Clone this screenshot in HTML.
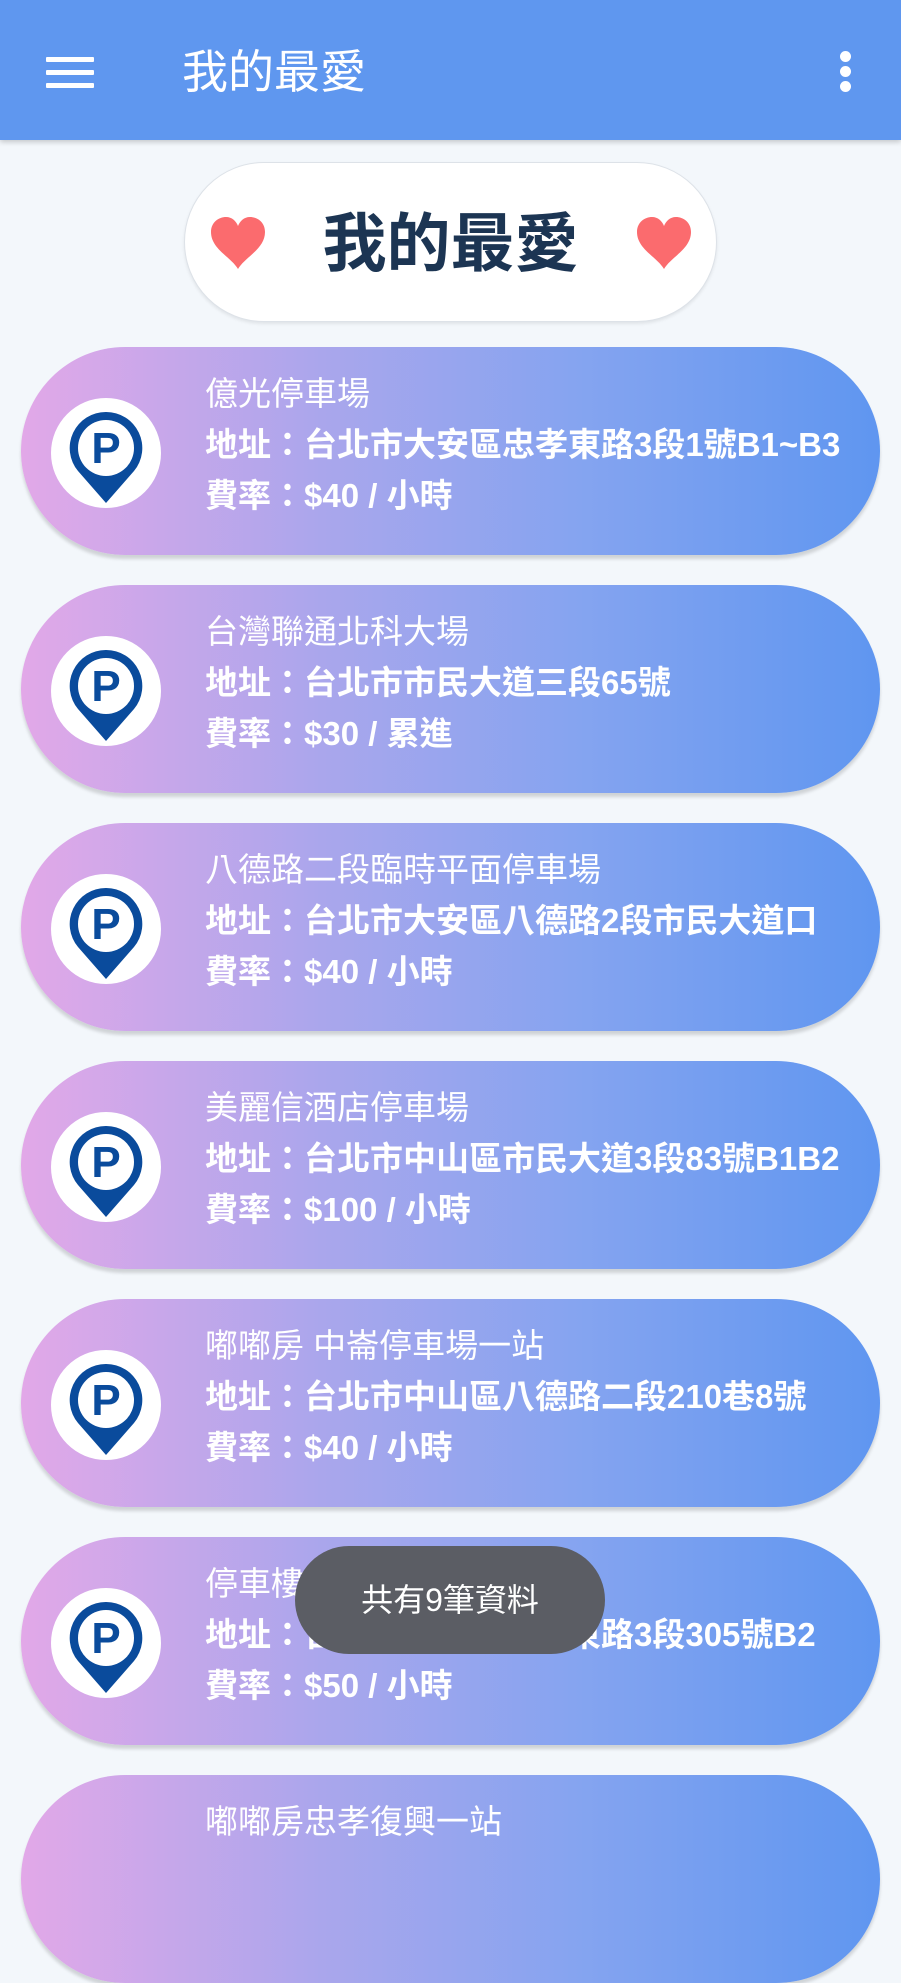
<!DOCTYPE html>
<html><head><meta charset="utf-8">
<style>
*{margin:0;padding:0;box-sizing:border-box}
body{width:901px;height:1817px;overflow:hidden;background:#f3f7fb;font-family:"Liberation Sans","Noto Sans CJK TC",sans-serif;position:relative}
.bar{position:absolute;left:0;top:0;width:901px;height:140px;background:#5f97ef;box-shadow:0 2px 5px rgba(0,0,0,.2)}
.ham{position:absolute;left:46px;width:48px;height:5px;background:#fff;border-radius:1px}
.title{position:absolute;left:182px;top:42px;color:#fff;font-size:46px;line-height:60px}
.dot{position:absolute;left:840px;width:11px;height:11px;border-radius:50%;background:#fff}
.pill{position:absolute;left:184px;top:162px;width:533px;height:160px;background:#fff;border-radius:80px;border:1px solid #dde2e8;box-shadow:0 2px 3px rgba(0,0,0,.08)}
.pill .t{position:absolute;left:0;right:0;top:46px;text-align:center;font-size:64px;font-weight:bold;color:#1c3553;line-height:70px}
.heart{position:absolute;top:52px}
.card{position:absolute;left:21px;width:859px;height:208px;border-radius:104px;background:linear-gradient(90deg,#e2a8e8 0%,#aaa6ec 35%,#85a4f0 65%,#5f96f0 100%);box-shadow:0 4px 3px rgba(0,0,0,.15)}
.ic{position:absolute;left:29px;top:50px;width:112px;height:112px}
.l{position:absolute;left:184px;color:#fff;font-size:33px;line-height:40px;white-space:nowrap}
.l1{top:27px}.l2{top:78px;font-weight:bold}.l3{top:129px;font-weight:bold}
.toast{position:absolute;left:295px;top:1546px;width:310px;height:108px;border-radius:54px;background:#5b5d64;color:#fff;font-size:32px;text-align:center;line-height:108px}
</style></head><body>
<div class="bar">
<div class="ham" style="top:57px"></div><div class="ham" style="top:70px"></div><div class="ham" style="top:83px"></div>
<div class="title">我的最愛</div>
<div class="dot" style="top:51px"></div><div class="dot" style="top:66px"></div><div class="dot" style="top:81px"></div>
</div>
<div class="pill">
<svg class="heart" style="left:24px" width="58" height="56" viewBox="0 0 58 56"><path d="M29 54 C22 42 2 34 2 17 C2 7 10 2 17 2 C23 2 27 6 29 11 C31 6 35 2 41 2 C48 2 56 7 56 17 C56 34 36 42 29 54Z" fill="#fb6b6e"/></svg>
<div class="t">我的最愛</div>
<svg class="heart" style="left:450px" width="58" height="56" viewBox="0 0 58 56"><path d="M29 54 C22 42 2 34 2 17 C2 7 10 2 17 2 C23 2 27 6 29 11 C31 6 35 2 41 2 C48 2 56 7 56 17 C56 34 36 42 29 54Z" fill="#fb6b6e"/></svg>
</div>

<div class="card" style="top:347px"><svg class="ic" viewBox="0 0 112 112"><circle cx="56" cy="56" r="55" fill="#fff"/><path d="M56 15 A36 36 0 0 1 84 74 L56 106 L28 74 A36 36 0 0 1 56 15Z" fill="#0a4b9c"/><circle cx="56" cy="51" r="28" fill="#fff"/><text x="56" y="66" text-anchor="middle" font-family="Liberation Sans" font-weight="bold" font-size="44" fill="#0a4b9c">P</text></svg>
<div class="l l1">億光停車場</div><div class="l l2">地址：台北市大安區忠孝東路3段1號B1~B3</div><div class="l l3">費率：$40 / 小時</div></div>

<div class="card" style="top:585px"><svg class="ic" viewBox="0 0 112 112"><circle cx="56" cy="56" r="55" fill="#fff"/><path d="M56 15 A36 36 0 0 1 84 74 L56 106 L28 74 A36 36 0 0 1 56 15Z" fill="#0a4b9c"/><circle cx="56" cy="51" r="28" fill="#fff"/><text x="56" y="66" text-anchor="middle" font-family="Liberation Sans" font-weight="bold" font-size="44" fill="#0a4b9c">P</text></svg>
<div class="l l1">台灣聯通北科大場</div><div class="l l2">地址：台北市市民大道三段65號</div><div class="l l3">費率：$30 / 累進</div></div>

<div class="card" style="top:823px"><svg class="ic" viewBox="0 0 112 112"><circle cx="56" cy="56" r="55" fill="#fff"/><path d="M56 15 A36 36 0 0 1 84 74 L56 106 L28 74 A36 36 0 0 1 56 15Z" fill="#0a4b9c"/><circle cx="56" cy="51" r="28" fill="#fff"/><text x="56" y="66" text-anchor="middle" font-family="Liberation Sans" font-weight="bold" font-size="44" fill="#0a4b9c">P</text></svg>
<div class="l l1">八德路二段臨時平面停車場</div><div class="l l2">地址：台北市大安區八德路2段市民大道口</div><div class="l l3">費率：$40 / 小時</div></div>

<div class="card" style="top:1061px"><svg class="ic" viewBox="0 0 112 112"><circle cx="56" cy="56" r="55" fill="#fff"/><path d="M56 15 A36 36 0 0 1 84 74 L56 106 L28 74 A36 36 0 0 1 56 15Z" fill="#0a4b9c"/><circle cx="56" cy="51" r="28" fill="#fff"/><text x="56" y="66" text-anchor="middle" font-family="Liberation Sans" font-weight="bold" font-size="44" fill="#0a4b9c">P</text></svg>
<div class="l l1">美麗信酒店停車場</div><div class="l l2">地址：台北市中山區市民大道3段83號B1B2</div><div class="l l3">費率：$100 / 小時</div></div>

<div class="card" style="top:1299px"><svg class="ic" viewBox="0 0 112 112"><circle cx="56" cy="56" r="55" fill="#fff"/><path d="M56 15 A36 36 0 0 1 84 74 L56 106 L28 74 A36 36 0 0 1 56 15Z" fill="#0a4b9c"/><circle cx="56" cy="51" r="28" fill="#fff"/><text x="56" y="66" text-anchor="middle" font-family="Liberation Sans" font-weight="bold" font-size="44" fill="#0a4b9c">P</text></svg>
<div class="l l1">嘟嘟房 中崙停車場一站</div><div class="l l2">地址：台北市中山區八德路二段210巷8號</div><div class="l l3">費率：$40 / 小時</div></div>

<div class="card" style="top:1537px"><svg class="ic" viewBox="0 0 112 112"><circle cx="56" cy="56" r="55" fill="#fff"/><path d="M56 15 A36 36 0 0 1 84 74 L56 106 L28 74 A36 36 0 0 1 56 15Z" fill="#0a4b9c"/><circle cx="56" cy="51" r="28" fill="#fff"/><text x="56" y="66" text-anchor="middle" font-family="Liberation Sans" font-weight="bold" font-size="44" fill="#0a4b9c">P</text></svg>
<div class="l l1">停車樓忠孝復興站</div><div class="l l2">地址：台北市大安區忠孝東路3段305號B2</div><div class="l l3">費率：$50 / 小時</div></div>

<div class="card" style="top:1775px"><div class="l l1">嘟嘟房忠孝復興一站</div></div>

<div class="toast">共有9筆資料</div>
</body></html>
